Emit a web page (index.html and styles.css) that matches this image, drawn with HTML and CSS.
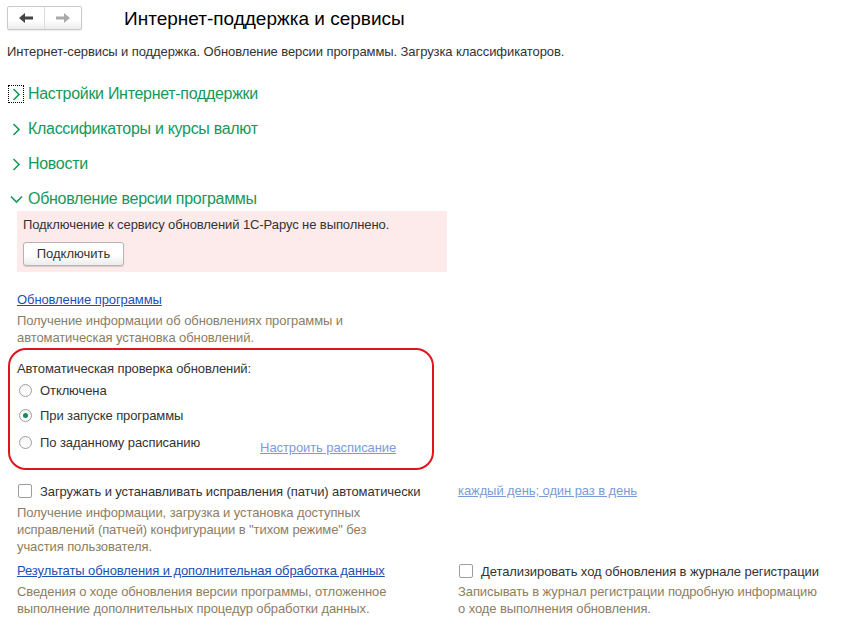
FILE: index.html
```html
<!DOCTYPE html>
<html lang="ru">
<head>
    <meta charset="UTF-8">
    <title>Интернет-поддержка и сервисы</title>
    <link rel="stylesheet" href="styles.css">
</head>
<body>
    <div class="header">
        <div class="nav">
            <span class="nav-btn">
                <svg width="14" height="10" viewBox="0 0 14 10"><path d="M0 5 L6 0 L6 3.5 L14 3.5 L14 6.5 L6 6.5 L6 10 Z" fill="#444"/></svg>
            </span>
            <span class="nav-btn">
                <svg width="14" height="10" viewBox="0 0 14 10"><path d="M14 5 L8 0 L8 3.5 L0 3.5 L0 6.5 L8 6.5 L8 10 Z" fill="#aaa"/></svg>
            </span>
        </div>
        <h1>Интернет-поддержка и сервисы</h1>
    </div>

    <p class="subtitle">Интернет-сервисы и поддержка. Обновление версии программы. Загрузка классификаторов.</p>

    <div class="group">
        <span class="chevron focused"><svg width="9" height="13" viewBox="0 0 9 13"><path d="M1.5 1 L7 6.5 L1.5 12" fill="none" stroke="#16985a" stroke-width="1.6"/></svg></span>
        Настройки Интернет-поддержки
    </div>
    <div class="group">
        <span class="chevron"><svg width="9" height="13" viewBox="0 0 9 13"><path d="M1.5 1 L7 6.5 L1.5 12" fill="none" stroke="#16985a" stroke-width="1.6"/></svg></span>
        Классификаторы и курсы валют
    </div>
    <div class="group">
        <span class="chevron"><svg width="9" height="13" viewBox="0 0 9 13"><path d="M1.5 1 L7 6.5 L1.5 12" fill="none" stroke="#16985a" stroke-width="1.6"/></svg></span>
        Новости
    </div>
    <div class="group">
        <span class="chevron"><svg width="13" height="9" viewBox="0 0 13 9"><path d="M1 1.5 L6.5 7 L12 1.5" fill="none" stroke="#16985a" stroke-width="1.6"/></svg></span>
        Обновление версии программы
    </div>

    <div class="section">
        <div class="alert">
            <div>Подключение к сервису обновлений 1С-Рарус не выполнено.</div>
            <button class="btn">Подключить</button>
        </div>

        <a class="link first">Обновление программы</a>
        <p class="hint">Получение информации об обновлениях программы и<br>автоматическая установка обновлений.</p>

        <div class="highlight">
            <div class="label">Автоматическая проверка обновлений:</div>
            <div class="radio-row"><span class="radio"></span>Отключена</div>
            <div class="radio-row"><span class="radio checked"></span>При запуске программы</div>
            <div class="radio-row">
                <span class="radio"></span>По заданному расписанию
                <a class="link light schedule">Настроить расписание</a>
            </div>
        </div>

        <div class="grid">
            <div class="check-row"><span class="checkbox"></span>Загружать и устанавливать исправления (патчи) автоматически</div>
            <div class="check-row"><a class="link light">каждый день; один раз в день</a></div>
            <p class="hint">Получение информации, загрузка и установка доступных<br>исправлений (патчей) конфигурации в "тихом режиме" без<br>участия пользователя.</p>
            <div></div>

            <div class="link-row"><a class="link">Результаты обновления и дополнительная обработка данных</a></div>
            <div class="link-row check-row"><span class="checkbox"></span>Детализировать ход обновления в журнале регистрации</div>
            <p class="hint">Сведения о ходе обновления версии программы, отложенное<br>выполнение дополнительных процедур обработки данных.</p>
            <p class="hint">Записывать в журнал регистрации подробную информацию<br>о ходе выполнения обновления.</p>
        </div>
    </div>
</body>
</html>
```

FILE: styles.css
```css
body {
    margin: 0;
    font-family: "Liberation Sans", Arial, sans-serif;
    font-size: 13px;
    letter-spacing: -0.09px;
    color: #333;
    background: #fff;
}
.header {
    display: flex;
    align-items: center;
    height: 36px;
    padding-left: 7px;
}
.nav {
    display: flex;
    height: 22px;
    border: 1px solid #c9c9c9;
    border-radius: 2px;
    background: linear-gradient(#fff 60%, #ececec);
    box-shadow: 0 1px 1px rgba(0,0,0,0.08);
}
.nav-btn {
    width: 36px;
    display: flex;
    align-items: center;
    justify-content: center;
}
.nav-btn + .nav-btn {
    border-left: 1px solid #dcdcdc;
}
h1 {
    margin: 2px 0 0 42px;
    font-size: 19px;
    font-weight: normal;
    letter-spacing: 0;
    color: #000;
}
.subtitle {
    margin: 8px 0 0 7px;
    line-height: 16px;
    color: #333;
}
.group {
    display: flex;
    align-items: center;
    height: 26px;
    margin-top: 9px;
    padding-left: 8px;
    font-size: 16px;
    letter-spacing: -0.3px;
    color: #16985a;
}
.subtitle + .group {
    margin-top: 21px;
}
.chevron {
    width: 14px;
    height: 16px;
    margin-right: 4px;
    display: flex;
    align-items: center;
    justify-content: center;
    border: 1px dotted transparent;
}
.chevron.focused {
    border-color: #000;
}
.section {
    padding-left: 17px;
}
.alert {
    width: 418px;
    margin-top: -1px;
    padding: 6px;
    background: #fdeaea;
    line-height: 16px;
}
.btn {
    display: block;
    margin-top: 9px;
    width: 101px;
    height: 24px;
    font: inherit;
    color: #333;
    border: 1px solid #b4b4b4;
    border-radius: 3px;
    background: linear-gradient(#fff 55%, #ececec);
    box-shadow: 0 1px 1px rgba(0,0,0,0.15);
}
.link {
    color: #1c4fb4;
    text-decoration: underline;
    line-height: 16px;
}
.link.light {
    color: #7a9bd9;
}
.link.first {
    display: block;
    margin-top: 20px;
}
.hint {
    margin: 4px 0 0;
    line-height: 17px;
    color: #8c7e62;
}
.highlight {
    margin: 2px 0 0 -9px;
    width: 408px;
    padding: 11px 7px 12px;
    border: 2px solid #e3131d;
    border-radius: 18px;
}
.label {
    line-height: 16px;
}
.radio-row {
    display: flex;
    align-items: center;
    height: 25px;
}
.radio-row:nth-child(2) {
    margin-top: 1px;
}
.radio-row:last-child {
    height: 27px;
    margin-top: 1px;
}
.radio {
    width: 11px;
    height: 11px;
    margin: 0 8px 0 2px;
    border: 1px solid #9e9e9e;
    border-radius: 50%;
    background: linear-gradient(#f4f4f4, #fff);
    display: flex;
    align-items: center;
    justify-content: center;
}
.radio.checked::after {
    content: "";
    width: 5px;
    height: 5px;
    border-radius: 50%;
    background: #178d4f;
}
.schedule {
    margin: 10px 0 0 60px;
}
.grid {
    display: grid;
    grid-template-columns: 441px auto;
    margin-top: 11px;
}
.check-row {
    display: flex;
    align-items: center;
    height: 20px;
}
.checkbox {
    width: 12px;
    height: 12px;
    margin: 0 8px 0 1px;
    border: 1px solid #9e9e9e;
    border-radius: 2px;
    background: #fff;
}
.link-row {
    margin-top: 8px;
}
.link-row.check-row {
    height: 16px;
}
.grid .hint {
    margin-top: 3px;
}
.grid .link-row ~ .hint {
    margin-top: 4px;
}
```
